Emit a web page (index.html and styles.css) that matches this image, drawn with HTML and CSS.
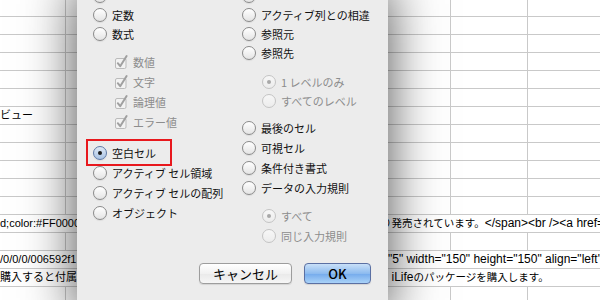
FILE: index.html
```html
<!DOCTYPE html>
<html lang="ja">
<head>
    <meta charset="UTF-8">
    <title>選択オプション</title>
    <link rel="stylesheet" href="styles.css">
</head>
<body>
    <div class="screen">
        <div class="sheet">
            <div class="row first"><div class="c a"></div><div class="c b"></div><div class="c c3"></div><div class="c d"></div></div>
            <div class="row"><div class="c a"></div><div class="c b"></div><div class="c c3"></div><div class="c d"></div></div>
            <div class="row"><div class="c a"></div><div class="c b"></div><div class="c c3"></div><div class="c d"></div></div>
            <div class="row"><div class="c a"></div><div class="c b"></div><div class="c c3"></div><div class="c d"></div></div>
            <div class="row"><div class="c a"></div><div class="c b"></div><div class="c c3"></div><div class="c d"></div></div>
            <div class="row"><div class="c a"></div><div class="c b"></div><div class="c c3"></div><div class="c d"></div></div>
            <div class="row"><div class="c a">ビュー</div><div class="c b"></div><div class="c c3"></div><div class="c d"></div></div>
            <div class="row"><div class="c a"></div><div class="c b"></div><div class="c c3"></div><div class="c d"></div></div>
            <div class="row"><div class="c a"></div><div class="c b"></div><div class="c c3"></div><div class="c d"></div></div>
            <div class="row"><div class="c a"></div><div class="c b"></div><div class="c c3"></div><div class="c d"></div></div>
            <div class="row"><div class="c a"></div><div class="c b"></div><div class="c c3"></div><div class="c d"></div></div>
            <div class="row"><div class="c a"></div><div class="c b"></div><div class="c c3"></div><div class="c d"></div></div>
            <div class="row text">
                <div class="left">d;color:#FF0000;font-weight:bold;</div>
                <div class="right"><span class="jp">り発売されています。</span>&lt;/span&gt;&lt;br /&gt;&lt;a href=</div>
            </div>
            <div class="row"><div class="c a"></div><div class="c b"></div><div class="c c3"></div><div class="c d"></div></div>
            <div class="row text">
                <div class="left">/0/0/0/006592f1.jpg</div>
                <div class="right">="5" width="150" height="150" align="left"</div>
            </div>
            <div class="row text">
                <div class="left">購入すると付属しているiLife</div>
                <div class="right"><span class="jp">、</span>iLife<span class="jp">のパッケージを購入します。</span></div>
            </div>
            <div class="row"><div class="c a"></div><div class="c b"></div><div class="c c3"></div><div class="c d"></div></div>
        </div>

        <div class="dialog">
            <div class="options">
                <div class="col">
                    <div class="group tight">
                        <div class="opt"><span class="radio"></span></div>
                        <div class="opt"><span class="radio"></span>定数</div>
                        <div class="opt"><span class="radio"></span>数式</div>
                    </div>
                    <div class="group sub checks">
                        <div class="opt dis"><svg class="check" width="14" height="14" viewBox="0 0 14 14"><rect x="0.5" y="3.5" width="10.5" height="10" rx="1.5" fill="#f2f2f2" stroke="#bbbbbb"/><path d="M2.8 8.2 L5.2 11.2 L11.6 1" fill="none" stroke="#a0a0a0" stroke-width="2" stroke-linecap="round" stroke-linejoin="round"/></svg>数値</div>
                        <div class="opt dis"><svg class="check" width="14" height="14" viewBox="0 0 14 14"><rect x="0.5" y="3.5" width="10.5" height="10" rx="1.5" fill="#f2f2f2" stroke="#bbbbbb"/><path d="M2.8 8.2 L5.2 11.2 L11.6 1" fill="none" stroke="#a0a0a0" stroke-width="2" stroke-linecap="round" stroke-linejoin="round"/></svg>文字</div>
                        <div class="opt dis"><svg class="check" width="14" height="14" viewBox="0 0 14 14"><rect x="0.5" y="3.5" width="10.5" height="10" rx="1.5" fill="#f2f2f2" stroke="#bbbbbb"/><path d="M2.8 8.2 L5.2 11.2 L11.6 1" fill="none" stroke="#a0a0a0" stroke-width="2" stroke-linecap="round" stroke-linejoin="round"/></svg>論理値</div>
                        <div class="opt dis"><svg class="check" width="14" height="14" viewBox="0 0 14 14"><rect x="0.5" y="3.5" width="10.5" height="10" rx="1.5" fill="#f2f2f2" stroke="#bbbbbb"/><path d="M2.8 8.2 L5.2 11.2 L11.6 1" fill="none" stroke="#a0a0a0" stroke-width="2" stroke-linecap="round" stroke-linejoin="round"/></svg>エラー値</div>
                    </div>
                    <div class="group lower">
                        <div class="opt marked"><span class="radio on"></span>空白セル</div>
                        <div class="opt"><span class="radio"></span>アクティブ セル領域</div>
                        <div class="opt"><span class="radio"></span>アクティブ セルの配列</div>
                        <div class="opt"><span class="radio"></span>オブジェクト</div>
                    </div>
                </div>

                <div class="col">
                    <div class="group tight">
                        <div class="opt"><span class="radio"></span></div>
                        <div class="opt"><span class="radio"></span>アクティブ列との相違</div>
                        <div class="opt"><span class="radio"></span>参照元</div>
                        <div class="opt"><span class="radio"></span>参照先</div>
                    </div>
                    <div class="group sub tight levels">
                        <div class="opt dis"><span class="radio on"></span>1 レベルのみ</div>
                        <div class="opt dis"><span class="radio"></span>すべてのレベル</div>
                    </div>
                    <div class="group after">
                        <div class="opt"><span class="radio"></span>最後のセル</div>
                        <div class="opt"><span class="radio"></span>可視セル</div>
                        <div class="opt"><span class="radio"></span>条件付き書式</div>
                        <div class="opt"><span class="radio"></span>データの入力規則</div>
                    </div>
                    <div class="group sub after">
                        <div class="opt dis"><span class="radio on"></span>すべて</div>
                        <div class="opt dis"><span class="radio"></span>同じ入力規則</div>
                    </div>
                </div>
            </div>

            <div class="buttons">
                <button class="btn">キャンセル</button>
                <button class="btn primary">OK</button>
            </div>
        </div>
    </div>
</body>
</html>
```

FILE: styles.css
```css
body {
    margin: 0;
    background: #fff;
    font-family: "Liberation Sans", "Noto Sans CJK JP", sans-serif;
}

.screen {
    position: relative;
    width: 600px;
    height: 300px;
    overflow: hidden;
    background: #fff;
}

/* spreadsheet behind the dialog */
.sheet {
    font-size: 11px;
    color: #000;
}

.row {
    display: flex;
    height: 18px;
    box-sizing: border-box;
    border-bottom: 1px solid #c9c9c9;
    line-height: 17px;
    white-space: nowrap;
}

.row.first {
    height: 17px;
}

.c {
    box-sizing: border-box;
    height: 100%;
}

.c.a {
    width: 66px;
    border-right: 1px solid #c9c9c9;
}

.c.b {
    width: 385px;
    border-right: 1px solid #c9c9c9;
}

.c.c3 {
    width: 77px;
    border-right: 1px solid #c9c9c9;
}

.c.d {
    flex: 1;
}

.row.text .left {
    width: 77px;
    margin-right: 304px;
    overflow: hidden;
}

.row.text .right {
    flex: 1;
    overflow: hidden;
    font-size: 12px;
}

.row.text .jp {
    font-size: 10.5px;
}

/* dialog */
.dialog {
    position: absolute;
    left: 77px;
    top: -14px;
    width: 311px;
    height: 330px;
    background: #ececec;
    box-shadow: 0 0 50px rgba(0, 0, 0, 0.7);
    font-family: "Noto Sans CJK JP", "Liberation Sans", sans-serif;
    font-size: 11px;
    color: #111;
}

.options {
    display: grid;
    grid-template-columns: 149px 1fr;
    padding-left: 16px;
    height: 260px;
}

.opt {
    display: flex;
    align-items: center;
    gap: 5px;
    height: 20px;
    white-space: nowrap;
    position: relative;
}

.group.tight .opt {
    height: 19px;
}

.group.sub {
    padding-left: 20px;
}

.group.checks {
    margin-top: 9px;
    padding-left: 22px;
}

.group.checks .opt {
    gap: 4px;
}

.group.lower {
    margin-top: 11px;
}

.group.levels {
    margin-top: 10px;
}

.group.after {
    margin-top: 8px;
}

.opt.dis {
    color: #8d8d8d;
}

.check {
    flex: none;
    overflow: visible;
}

.radio {
    flex: none;
    width: 14px;
    height: 14px;
    box-sizing: border-box;
    border-radius: 50%;
    border: 1px solid #8a8a8a;
    background: linear-gradient(#ffffff, #e4e4e4);
    box-shadow: 0 1px 1px rgba(0, 0, 0, 0.08);
    position: relative;
}

.radio.on {
    border-color: #5e79a6;
    background: linear-gradient(#dfe9f5, #a9c3e4);
}

.radio.on::after {
    content: "";
    position: absolute;
    left: 4px;
    top: 4px;
    width: 4px;
    height: 4px;
    border-radius: 50%;
    background: #1b1b1b;
}

.opt.dis .radio {
    border-color: #c4c4c4;
    background: linear-gradient(#f7f7f7, #ececec);
    box-shadow: none;
}

.opt.dis .radio.on::after {
    background: #a8a8a8;
}

/* red highlight around the chosen option */
.opt.marked::after {
    content: "";
    position: absolute;
    left: -7px;
    top: -4px;
    width: 86px;
    height: 27px;
    box-sizing: border-box;
    border: 2px solid #e8181d;
}

.buttons {
    display: flex;
    justify-content: flex-end;
    gap: 12px;
    padding-right: 17px;
    margin-top: 17px;
}

.btn {
    height: 21px;
    width: 93px;
    padding: 0;
    font-family: "Noto Sans CJK JP", "Liberation Sans", sans-serif;
    font-size: 13px;
    line-height: 19px;
    color: #000;
    border: 1px solid #9d9d9d;
    border-radius: 4px;
    background: linear-gradient(#ffffff, #f1f1f1 50%, #e9e9e9 51%, #f6f6f6);
    box-shadow: 0 1px 1px rgba(0, 0, 0, 0.1);
}

.btn.primary {
    width: 67px;
    border-color: #5b70a3;
    background: linear-gradient(#c9e0f8, #8dbbef 50%, #74aaec 51%, #a9d2f8);
    font-weight: 500;
}
```
